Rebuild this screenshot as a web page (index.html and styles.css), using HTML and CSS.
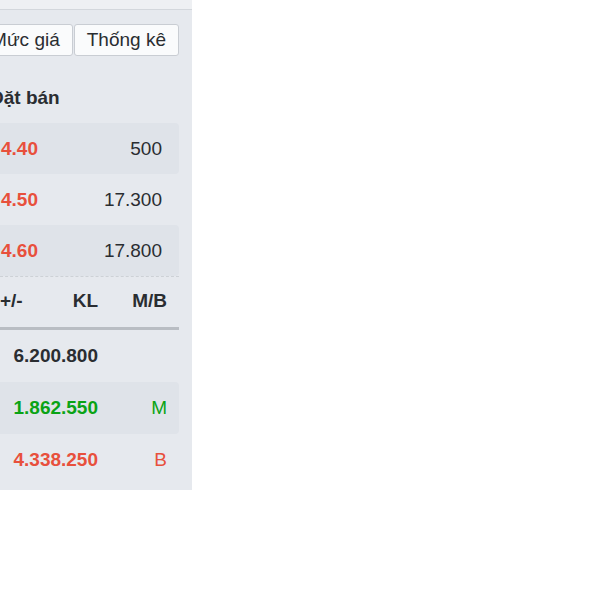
FILE: index.html
```html
<!DOCTYPE html>
<html lang="vi">
  <head>
    <meta charset="UTF-8" />
    <meta name="viewport" content="width=device-width, initial-scale=1.0" />
    <title>Sổ lệnh</title>
    <link rel="stylesheet" href="styles.css">
  </head>
  <body>
    <aside class="panel">
      <div class="panel-top"></div>
      <div class="panel-body">
        <!-- Tabs -->
        <div class="tabs">
          <button class="tab">Mức giá</button>
          <button class="tab">Thống kê</button>
        </div>

        <!-- Order book -->
        <div class="book">
          <div class="book-title">Đặt bán</div>
          <div class="book-row shaded">
            <span class="price down">4.40</span>
            <span class="vol">500</span>
          </div>
          <div class="book-row">
            <span class="price down">4.50</span>
            <span class="vol">17.300</span>
          </div>
          <div class="book-row shaded">
            <span class="price down">4.60</span>
            <span class="vol">17.800</span>
          </div>
        </div>

        <!-- Stats -->
        <div class="stats">
          <div class="stats-head">
            <span>+/-</span>
            <span class="num">KL</span>
            <span class="num">M/B</span>
          </div>
          <div class="stats-row">
            <span></span>
            <span class="num total">6.200.800</span>
            <span class="num"></span>
          </div>
          <div class="stats-row shaded">
            <span></span>
            <span class="num up">1.862.550</span>
            <span class="num side up">M</span>
          </div>
          <div class="stats-row">
            <span></span>
            <span class="num down">4.338.250</span>
            <span class="num side down">B</span>
          </div>
        </div>
      </div>
    </aside>
  </body>
</html>
```

FILE: styles.css
```css
:root {
  --bg-panel: #e6e9ee;
  --bg-top: #eef0f3;
  --bg-row: #dfe3e9;
  --line: #d3d7dc;
  --line-strong: #b9bdc3;
  --text: #2a2d31;
  --red: #e8503c;
  --green: #0aa315;
}

* {
  margin: 0;
  padding: 0;
  box-sizing: border-box;
  font-family: 'Liberation Sans', Arial, sans-serif;
}

body {
  background: #ffffff;
  color: var(--text);
}

.panel {
  width: 192px;
  height: 490px;
  background-color: var(--bg-panel);
  overflow: hidden;
}

.panel-top {
  height: 10px;
  background-color: var(--bg-top);
  border-bottom: 1px solid var(--line);
}

.panel-body {
  width: 189px;
  margin-left: -10px;
}

/* Tabs */
.tabs {
  display: flex;
  justify-content: flex-end;
  margin-top: 14px;
}

.tab {
  flex-shrink: 0;
  height: 32px;
  padding: 0 12px;
  font-size: 19px;
  white-space: nowrap;
  color: var(--text);
  background-color: #fafbfc;
  border: 1px solid #c9cdd3;
  border-radius: 3px;
}

.tab + .tab {
  margin-left: 1px;
}

/* Order book */
.book {
  margin-top: 16px;
  border-bottom: 1px dashed #cdd1d6;
}

.book-title {
  height: 51px;
  display: flex;
  align-items: center;
  font-size: 19px;
  font-weight: 700;
  white-space: nowrap;
}

.book-row {
  height: 51px;
  display: flex;
  align-items: center;
  justify-content: space-between;
  padding: 0 17px 0 11px;
  font-size: 19px;
  border-radius: 4px;
}

.shaded {
  background-color: var(--bg-row);
}

.price {
  font-weight: 700;
}

.down {
  color: var(--red);
}

.up {
  color: var(--green);
}

/* Stats */
.stats-head,
.stats-row {
  display: grid;
  grid-template-columns: 10px 88px 1fr;
  align-items: center;
  padding: 0 12px 0 10px;
  font-size: 19px;
  white-space: nowrap;
}

.stats-head {
  height: 53px;
  padding-bottom: 3px;
  font-weight: 700;
  border-bottom: 3px solid var(--line-strong);
}

.stats-row {
  height: 52px;
  border-radius: 4px;
}

.num {
  text-align: right;
}

.stats-row .num {
  font-weight: 700;
}

.stats-row .side {
  font-weight: 400;
}

.total {
  color: var(--text);
}
```
